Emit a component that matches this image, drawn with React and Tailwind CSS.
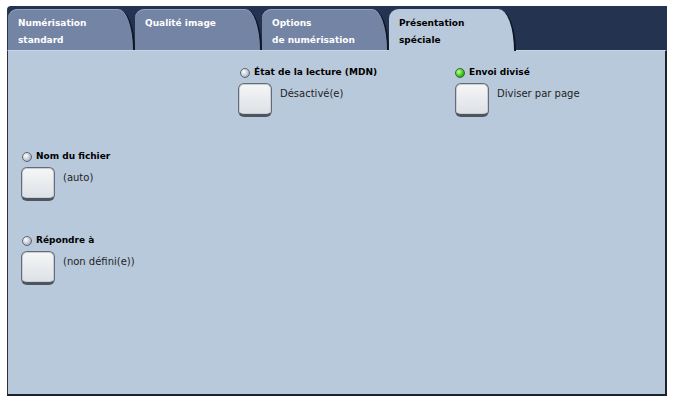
import React from 'react';

const FONT = { fontFamily: '"DejaVu Sans", Verdana, sans-serif' };

const tabs = [
  { lines: ['Numérisation', 'standard'] },
  { lines: ['Qualité image'] },
  { lines: ['Options', 'de numérisation'] },
  { lines: ['Présentation', 'spéciale'], active: true },
];

function Tab({ tab }) {
  const base = 'w-[127px] h-[41px] shrink-0 rounded-tl-[10px] rounded-tr-[18px_44px] border-r-2 border-[#0e1627] pl-[10px] pt-[6px] text-[9px] font-bold leading-[17px]';
  return (
    <div className={tab.active
      ? `${base} bg-[#b9c9dc] text-black h-[42px] -mb-px relative z-10`
      : `${base} bg-[#7384a5] text-white shadow-[inset_0_1px_0_#93a2bf]`}>
      {tab.lines.map((l, i) => <div key={i}>{l}</div>)}
    </div>
  );
}

function Radio({ on }) {
  return (
    <span className={on
      ? 'w-[10px] h-[10px] rounded-full border border-[#2f6b2a] bg-[radial-gradient(circle_at_35%_35%,#c8ff9a,#3cc81e_55%,#1d7a12)] shrink-0'
      : 'w-[10px] h-[10px] rounded-full border border-[#5d6675] bg-[radial-gradient(circle_at_35%_35%,#ffffff,#c3c9d2_55%,#7d8592)] shrink-0'} />
  );
}

function Option({ label, value, on, radioInset = 'ml-px' }) {
  return (
    <div className="flex flex-col">
      <div className={`flex items-center gap-[4px] h-[14px] ${radioInset}`}>
        <Radio on={on} />
        <span className="text-[9px] font-bold text-black">{label}</span>
      </div>
      <div className="flex items-start mt-[3px]">
        <div className="w-[34px] h-[34px] rounded-[6px] border border-[#646b76] border-b-[3px] border-b-[#4f555e] bg-gradient-to-b from-[#f5f6f7] to-[#dde1e6] shadow-[inset_0_0_0_1px_#c9ced5] shrink-0" />
        <span className="ml-[8px] mt-[3px] text-[10px] text-[#1e1e1e]">{value}</span>
      </div>
    </div>
  );
}

export default function App() {
  return (
    <div className="w-[673px] h-[398px] bg-white pt-[6px] pl-[7px]" style={FONT}>
      <div className="w-[660px] h-[390px] flex flex-col">
        <div className="h-[44px] bg-[#243350] rounded-tl-[4px] flex items-end pl-px">
          {tabs.map((t, i) => <Tab key={i} tab={t} />)}
        </div>
        <div className="flex-1 bg-[#b9c9dc] border-l border-[#2a3240] border-r-2 border-r-[#1c2230] border-b-2 border-b-[#1c2230] border-t border-t-[#c9d6e6] grid grid-cols-[217px_217px_1fr] grid-rows-[84px_84px_1fr] pl-[13px] pt-[15px]">
          <div />
          <Option label="État de la lecture (MDN)" value="Désactivé(e)" radioInset="ml-[2px]" />
          <Option label="Envoi divisé" value="Diviser par page" on radioInset="ml-0" />
          <Option label="Nom du fichier" value="(auto)" />
          <div />
          <div />
          <Option label="Répondre à" value="(non défini(e))" />
        </div>
      </div>
    </div>
  );
}
